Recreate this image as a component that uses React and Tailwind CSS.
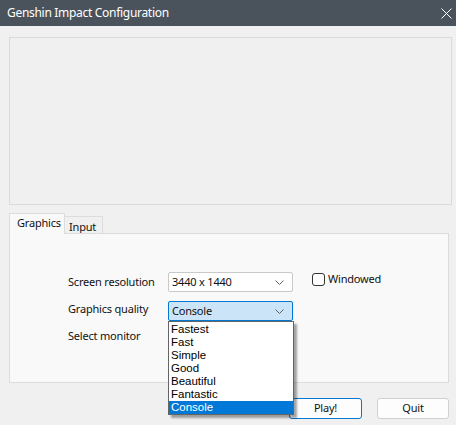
const Chevron = () => (
  <svg width="9" height="5" viewBox="0 0 9 5" className="text-[#606060]">
    <path d="M0.5 0.5 L4.5 4.5 L8.5 0.5" fill="none" stroke="currentColor" strokeWidth="1" />
  </svg>
)

const qualities = ['Fastest', 'Fast', 'Simple', 'Good', 'Beautiful', 'Fantastic', 'Console']

export default function App() {
  return (
    <div className="relative w-[456px] h-[425px] bg-[#f0f0f0] flex flex-col font-['Noto_Sans',sans-serif] text-[11px] tracking-[-0.2px] text-[#111] overflow-hidden">
      {/* title bar */}
      <div className="h-[26px] bg-[#4a535b] flex items-center justify-between pl-[7px] pr-[4px] shrink-0">
        <span className="text-white text-[12px] tracking-[-0.3px]">Genshin Impact Configuration</span>
        <svg width="11" height="11" viewBox="0 0 11 11">
          <path d="M0.5 0.5 L10.5 10.5 M10.5 0.5 L0.5 10.5" stroke="#ffffff" strokeWidth="1" />
        </svg>
      </div>

      {/* banner area */}
      <div className="ml-[9px] mt-[11px] w-[443px] h-[168px] border border-[#dadada] bg-[#f0f0f0]" />

      {/* tabs */}
      <div className="ml-[9px] mt-[8px] flex items-end h-[21px]">
        <div className="h-[21px] w-[56px] border border-b-0 border-[#dcdcdc] bg-[#f9f9f9] pl-[7px] pt-[1px] relative z-10">
          Graphics
        </div>
        <div className="h-[18px] w-[38px] border border-l-0 border-b-0 border-[#dcdcdc] bg-[#f0f0f0] pl-[4px] leading-[19px]">
          Input
        </div>
      </div>
      <div className="ml-[9px] w-[440px] h-[150px] border border-[#dcdcdc] bg-[#f9f9f9] -mt-px flex flex-col pt-[38px] pl-[58px] gap-[9px]">
        <div className="flex items-center h-[20px]">
          <span className="w-[100px]">Screen resolution</span>
          <div className="w-[125px] h-[20px] bg-white border border-[#c9c9c9] rounded-[2px] flex items-center justify-between pl-[3px] pr-[8px]">
            <span>3440 x 1440</span>
            <Chevron />
          </div>
          <label className="flex items-center ml-[19px] -mt-[6px]">
            <span className="w-[13px] h-[13px] border border-[#333] rounded-[3px] bg-white" />
            <span className="ml-[3px]">Windowed</span>
          </label>
        </div>
        <div className="flex items-center h-[20px]">
          <span className="w-[100px] -mt-[4px]">Graphics quality</span>
          <div className="w-[125px] h-[20px] bg-[#cce4f7] border border-[#0078d4] rounded-[2px] flex items-center justify-between pl-[3px] pr-[8px]">
            <span>Console</span>
            <Chevron />
          </div>
        </div>
        <div className="flex items-center h-[16px] -mt-[2px]">
          <span className="w-[100px]">Select monitor</span>
        </div>
      </div>

      {/* buttons */}
      <div className="mt-[15px] flex justify-end gap-[15px] pr-[7px]">
        <button className="w-[73px] h-[21px] bg-[#fdfdfd] border border-[#0078d4] rounded-[3px]">Play!</button>
        <button className="w-[72px] h-[21px] bg-[#fdfdfd] border border-[#d0d0d0] rounded-[3px]">Quit</button>
      </div>

      {/* open dropdown list */}
      <div className="absolute left-[168px] top-[321px] w-[126px] h-[94px] bg-white border border-[#646464] shadow-[3px_3px_2px_rgba(0,0,0,0.35)] flex flex-col py-px font-['Liberation_Sans',sans-serif] text-[11.5px] tracking-normal text-black">
        {qualities.map((q) => (
          <div
            key={q}
            className={
              q === 'Console'
                ? 'h-[13px] leading-[13px] pl-[2px] bg-[#0078d7] text-white'
                : 'h-[13px] leading-[13px] pl-[2px]'
            }
          >
            {q}
          </div>
        ))}
      </div>
    </div>
  )
}
